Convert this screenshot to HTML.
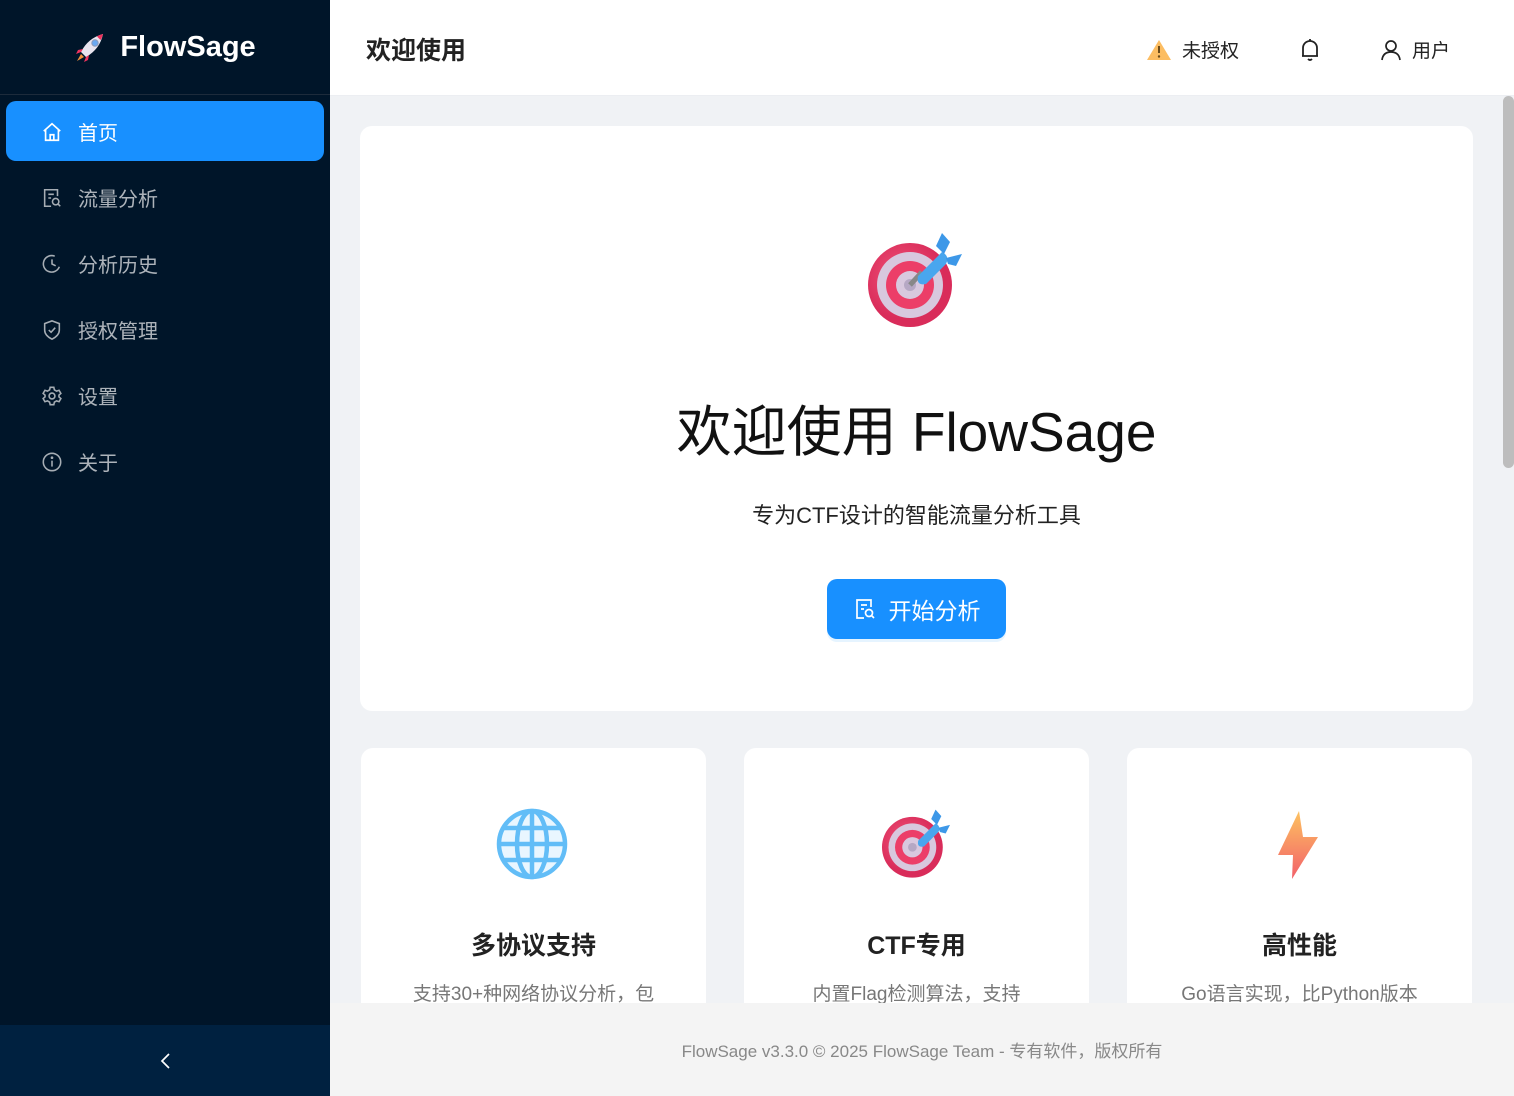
<!DOCTYPE html>
<html><head><meta charset="utf-8">
<style>
*{margin:0;padding:0;box-sizing:border-box}
body{width:1514px;height:1096px;overflow:hidden;position:relative;background:#f0f2f5;font-family:"Liberation Sans","Noto Sans CJK SC",sans-serif}
.side{position:absolute;left:0;top:0;width:330px;height:1096px;background:#001529}
.logo{height:95px;border-bottom:1px solid #1d2b3b;display:flex;align-items:center;justify-content:center;gap:12px;color:#fff;font-size:29px;font-weight:bold}
.menu{padding:6px 6px 0}
.item{height:60px;margin-bottom:6px;border-radius:10px;display:flex;align-items:center;padding-left:35px;color:rgba(255,255,255,.68);font-size:20px}
.item svg{margin-right:15px;margin-top:2px}
.item.act{background:#1890ff;color:#fff}
.collapse{position:absolute;left:0;bottom:0;width:330px;height:71px;background:#002140;display:flex;align-items:center;justify-content:center}
.header{position:absolute;left:330px;top:0;right:0;height:96px;background:#fff;border-bottom:1px solid #eceef2}
.htitle{position:absolute;left:36px;top:31px;font-size:25px;font-weight:bold;color:#222}
.hr{position:absolute;top:36px;font-size:19px;color:#222;display:flex;align-items:center;gap:10px}
.card{position:absolute;background:#fff;border-radius:12px}
.hero{left:360px;top:126px;width:1113px;height:585px;text-align:center}
.h1{position:absolute;left:360px;width:1113px;top:397px;font-size:55px;line-height:70px;color:#111;text-align:center}
.sub{position:absolute;left:360px;width:1113px;top:498px;font-size:22px;color:#222;text-align:center}
.btn{position:absolute;left:827px;top:579px;width:179px;height:60px;background:#1890ff;border-radius:10px;color:#fff;font-size:23px;display:flex;align-items:center;justify-content:center;gap:12px;box-shadow:0 3px 0 #e6f4ff}
.feat{top:748px;width:345px;height:300px;text-align:center}
.ft{position:absolute;top:926px;font-size:25px;font-weight:bold;color:#222;text-align:center}
.fd{position:absolute;top:979px;font-size:19px;color:#777;text-align:center}
.footer{position:absolute;left:330px;top:1003px;right:0;bottom:0;background:#f4f4f4;text-align:center;color:#888;font-size:17px;padding-top:34px}
.sb{position:absolute;left:1503px;top:96px;width:11px;height:372px;background:#bdbdbd;border-radius:6px}
</style></head><body>
<div class="side">
 <div class="logo">
  <svg width="34" height="34" viewBox="0 0 34 34"><path d="M12 27 L7 22 Q14 8 29 4 Q26 19 12 27Z" fill="#e8e4ee"/><circle cx="21" cy="13" r="3.2" fill="#6aa8f0" stroke="#8c99b8" stroke-width="1"/><path d="M29 4 Q28 8 26.5 10 L23 6.5 Q25 5 29 4Z" fill="#f0335e"/><path d="M9 19 L4 20 L2 24 L7 22Z" fill="#f0335e"/><path d="M15 25 L14 30 L10 32 L12 27Z" fill="#f0335e"/><path d="M7 24 L3 31 L10 27Z" fill="#f3913a"/></svg>
  <span>FlowSage</span>
 </div>
 <div class="menu">
  <div class="item act"><svg width="22" height="22" viewBox="0 0 24 24" fill="none" stroke="#fff" stroke-width="1.8"><path d="M3 11 L12 3 L21 11 M5 9.5 V21 H19 V9.5 M10 21 V15 H14 V21"/></svg>首页</div>
  <div class="item"><svg width="22" height="22" viewBox="0 0 24 24" fill="none" stroke="#a6adb4" stroke-width="1.7"><path d="M11 21 H4 V3 H18 V10 M8 8 H14 M8 12 H11"/><circle cx="16" cy="16" r="3.5"/><path d="M18.5 18.5 L21 21"/></svg>流量分析</div>
  <div class="item"><svg width="22" height="22" viewBox="0 0 24 24" fill="none" stroke="#a6adb4" stroke-width="1.7"><path d="M20 15 A9 9 0 1 1 15 3.5"/><path d="M12 7 V12 L16 14"/></svg>分析历史</div>
  <div class="item"><svg width="22" height="22" viewBox="0 0 24 24" fill="none" stroke="#a6adb4" stroke-width="1.7"><path d="M12 2 L20 5 V12 Q20 18 12 22 Q4 18 4 12 V5Z"/><path d="M8.5 12 L11 14.5 L15.5 9.5"/></svg>授权管理</div>
  <div class="item"><svg width="22" height="22" viewBox="0 0 24 24" fill="none" stroke="#a6adb4" stroke-width="1.7"><circle cx="12" cy="12" r="3.2"/><path d="M10 2.5 H14 L14.6 5.3 L17 6.7 L19.7 5.8 L21.7 9.2 L19.6 11 V13 L21.7 14.8 L19.7 18.2 L17 17.3 L14.6 18.7 L14 21.5 H10 L9.4 18.7 L7 17.3 L4.3 18.2 L2.3 14.8 L4.4 13 V11 L2.3 9.2 L4.3 5.8 L7 6.7 L9.4 5.3Z"/></svg>设置</div>
  <div class="item"><svg width="22" height="22" viewBox="0 0 24 24" fill="none" stroke="#a6adb4" stroke-width="1.7"><circle cx="12" cy="12" r="9.5"/><path d="M12 10.5 V17"/><circle cx="12" cy="7.3" r=".6" fill="#a6adb4"/></svg>关于</div>
 </div>
 <div class="collapse"><svg width="14" height="20" viewBox="0 0 14 20" fill="none" stroke="#fff" stroke-width="1.7"><path d="M11 3 L4 10 L11 17"/></svg></div>
</div>

<div class="header">
 <div class="htitle">欢迎使用</div>
 <div class="hr" style="left:816px"><svg width="26" height="22" viewBox="0 0 26 22"><path d="M13 1 L25 21 H1Z" fill="#fcbd62"/><path d="M13 7 V14" stroke="#6b4b1a" stroke-width="2"/><circle cx="13" cy="17.5" r="1.2" fill="#6b4b1a"/></svg><span>未授权</span></div>
 <div class="hr" style="left:968px;top:37px"><svg width="24" height="26" viewBox="0 0 24 26" fill="none" stroke="#222" stroke-width="1.8"><path d="M5 19 V11 A7 7 0 0 1 19 11 V19 H4 H20 M12 2 V4 M10 22 Q12 24 14 22"/></svg></div>
 <div class="hr" style="left:1050px"><svg width="22" height="22" viewBox="0 0 22 22" fill="none" stroke="#222" stroke-width="1.7"><circle cx="11" cy="7" r="5"/><path d="M2 21 Q3 13 11 13 Q19 13 20 21"/></svg><span>用户</span></div>
</div>

<div class="card hero"></div>
<svg style="position:absolute;left:860px;top:228px" width="110" height="105" viewBox="0 0 110 105">
 <defs><radialGradient id="g1" cx=".4" cy=".4"><stop offset="0" stop-color="#f2557a"/><stop offset="1" stop-color="#d92c5a"/></radialGradient></defs>
 <circle cx="50" cy="57" r="42" fill="url(#g1)"/><circle cx="50" cy="57" r="33" fill="#d8c8de"/><circle cx="50" cy="57" r="24" fill="#ec3e68"/><circle cx="50" cy="57" r="14" fill="#d8c8de"/><circle cx="50" cy="57" r="6" fill="#b6a8c4"/>
 <path d="M50 57 L62 44" stroke="#888" stroke-width="5"/>
 <path d="M58 48 L82 24 Q90 28 86 36 L66 56 Q56 58 58 48Z" fill="#49a6ee"/>
 <path d="M76 18 L82 5 L90 14 L84 26Z M86 30 L102 26 L96 38 L88 36Z" fill="#3d98e8"/>
</svg>
<div class="h1">欢迎使用 FlowSage</div>
<div class="sub">专为CTF设计的智能流量分析工具</div>
<div class="btn"><svg width="24" height="24" viewBox="0 0 24 24" fill="none" stroke="#fff" stroke-width="1.7"><path d="M11 21 H4 V3 H18 V10 M8 8 H14 M8 12 H11"/><circle cx="16" cy="16" r="3.5"/><path d="M18.5 18.5 L21 21"/></svg>开始分析</div>

<div class="card feat" style="left:361px"></div>
<div class="card feat" style="left:744px"></div>
<div class="card feat" style="left:1127px"></div>
<svg style="position:absolute;left:496px;top:808px" width="72" height="72" viewBox="0 0 72 72" fill="none" stroke="#62bdf7" stroke-width="4.5"><circle cx="36" cy="36" r="33" fill="#e9f6ff"/><ellipse cx="36" cy="36" rx="15" ry="33"/><path d="M36 3 V69 M3 36 H69 M8 20 H64 M8 52 H64"/></svg>
<svg style="position:absolute;left:876px;top:806px" width="80" height="76" viewBox="0 0 110 105">
 <circle cx="50" cy="57" r="42" fill="url(#g1)"/><circle cx="50" cy="57" r="33" fill="#d8c8de"/><circle cx="50" cy="57" r="24" fill="#ec3e68"/><circle cx="50" cy="57" r="14" fill="#d8c8de"/><circle cx="50" cy="57" r="6" fill="#b6a8c4"/>
 <path d="M58 48 L82 24 Q90 28 86 36 L66 56 Q56 58 58 48Z" fill="#49a6ee"/>
 <path d="M76 18 L82 5 L90 14 L84 26Z M86 30 L102 26 L96 38 L88 36Z" fill="#3d98e8"/>
</svg>
<svg style="position:absolute;left:1276px;top:809px" width="44" height="72" viewBox="0 0 44 72"><defs><linearGradient id="g2" x1="0" y1="0" x2="0" y2="1"><stop offset="0" stop-color="#fdc260"/><stop offset="1" stop-color="#f2606a"/></linearGradient></defs><path d="M23 2 L2 46 H17 L16 70 L42 28 H27Z" fill="url(#g2)"/></svg>
<div class="ft" style="left:361px;width:345px">多协议支持</div>
<div class="ft" style="left:744px;width:345px">CTF专用</div>
<div class="ft" style="left:1127px;width:345px">高性能</div>
<div class="fd" style="left:361px;width:345px">支持30+种网络协议分析，包</div>
<div class="fd" style="left:744px;width:345px">内置Flag检测算法，支持</div>
<div class="fd" style="left:1127px;width:345px">Go语言实现，比Python版本</div>

<div class="footer">FlowSage v3.3.0 © 2025 FlowSage Team - 专有软件，版权所有</div>
<div class="sb"></div>
</body></html>
